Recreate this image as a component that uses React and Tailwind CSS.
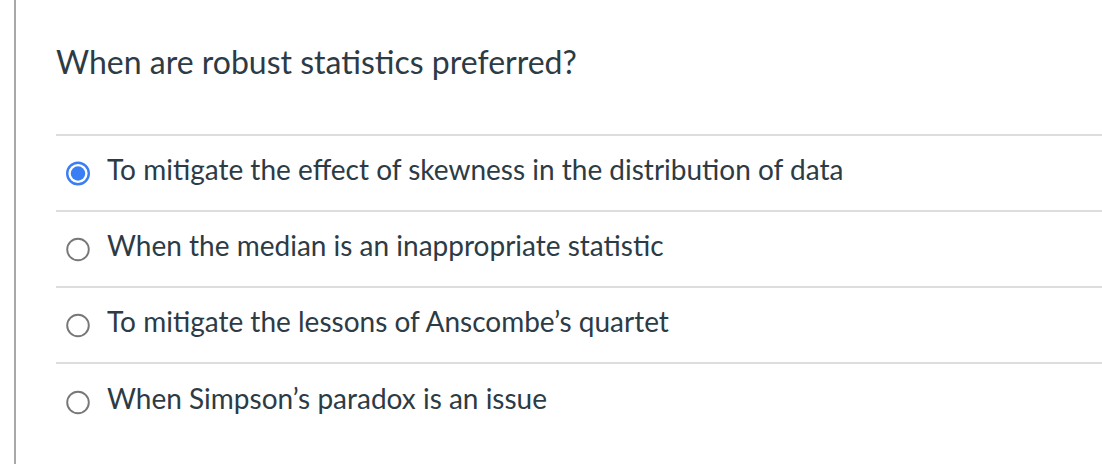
import React, { useState } from "react";

const options = [
  "To mitigate the effect of skewness in the distribution of data",
  "When the median is an inappropriate statistic",
  "To mitigate the lessons of Anscombe\u2019s quartet",
  "When Simpson\u2019s paradox is an issue",
];

const Radio = ({ checked }) => (
  <span className="flex h-6 w-6 shrink-0 items-center justify-center">
    {checked ? (
      <svg width="25" height="25" viewBox="0 0 25 25">
        <circle cx="12.5" cy="12.5" r="11.25" fill="none" stroke="#3a7df5" strokeWidth="2.5" />
        <circle cx="12.5" cy="12.5" r="7.5" fill="#3a7df5" />
      </svg>
    ) : (
      <svg width="25" height="25" viewBox="0 0 25 25">
        <circle cx="12.5" cy="12.5" r="11.25" fill="none" stroke="#777777" strokeWidth="2" />
      </svg>
    )}
  </span>
);

const App = () => {
  const [selected, setSelected] = useState(0); // first answer is picked

  return (
    <div className="h-[464px] w-[1102px] overflow-hidden bg-white font-['Lato','Liberation_Sans',sans-serif] text-[#2d3b45]">
      <div className="ml-[14px] h-full border-l-2 border-[#a8a8a8] pl-[40px]">
        <h2 className="pt-[40px] text-[32px] leading-[44px]">When are robust statistics preferred?</h2>

        <div className="mt-[50px] border-t-2 border-[#dddddd]">
          {options.map((text, i) => (
            <label
              key={i}
              onClick={() => setSelected(i)}
              className={`flex h-[76px] cursor-pointer items-center gap-[17px] pl-[10px] ${
                i < options.length - 1 ? "border-b-2 border-[#dddddd]" : ""
              }`}
            >
              <Radio checked={selected === i} />
              <span className="mb-[8px] text-[28px] leading-[34px]">{text}</span>
            </label>
          ))}
        </div>
      </div>
    </div>
  );
};

export default App;
